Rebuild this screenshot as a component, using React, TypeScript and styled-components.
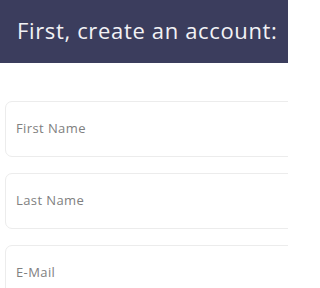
import styled, { createGlobalStyle } from 'styled-components';

const GlobalStyle = createGlobalStyle`
  * {
    box-sizing: border-box;
  }

  body {
    margin: 0;
    background-color: #ffffff;
    font-family: 'Open Sans', 'Lato', sans-serif;
    overflow: hidden;
  }
`;

const fields = [
  { id: 'firstName', label: 'First Name' },
  { id: 'lastName', label: 'Last Name' },
  { id: 'email', label: 'E-Mail' },
];

const App = () => {
  return (
    <S.Page>
      <GlobalStyle />
      <S.Header>
        <S.Title>First, create an account:</S.Title>
      </S.Header>
      <S.Form>
        {fields.map((field) => (
          <S.Input key={field.id} type={'text'} placeholder={field.label} />
        ))}
      </S.Form>
    </S.Page>
  );
};

const S = {
  Page: styled.div`
    width: 288px;
    height: 288px;
    overflow: hidden;
  `,

  Header: styled.header`
    display: flex;
    align-items: center;
    height: 63px;
    padding: 0 0 4px 17px;
    background-color: #3b3d5d;
  `,

  Title: styled.h1`
    margin: 0;
    font-size: 22px;
    font-weight: 400;
    letter-spacing: 0.65px;
    color: #f2f2f5;
    white-space: nowrap;
  `,

  Form: styled.form`
    display: flex;
    flex-direction: column;
    gap: 16px;
    padding: 38px 0 0 5px;
  `,

  Input: styled.input`
    width: 320px;
    height: 56px;
    padding: 0 0 3px 10px;
    border: 1px solid #ececec;
    border-radius: 7px;
    outline: none;
    font-family: 'Open Sans', 'Lato', sans-serif;
    font-size: 13px;
    letter-spacing: 0.4px;
    color: #555555;
    background-color: #ffffff;

    &::placeholder {
      color: #808080;
    }
  `,
};

export default App;
